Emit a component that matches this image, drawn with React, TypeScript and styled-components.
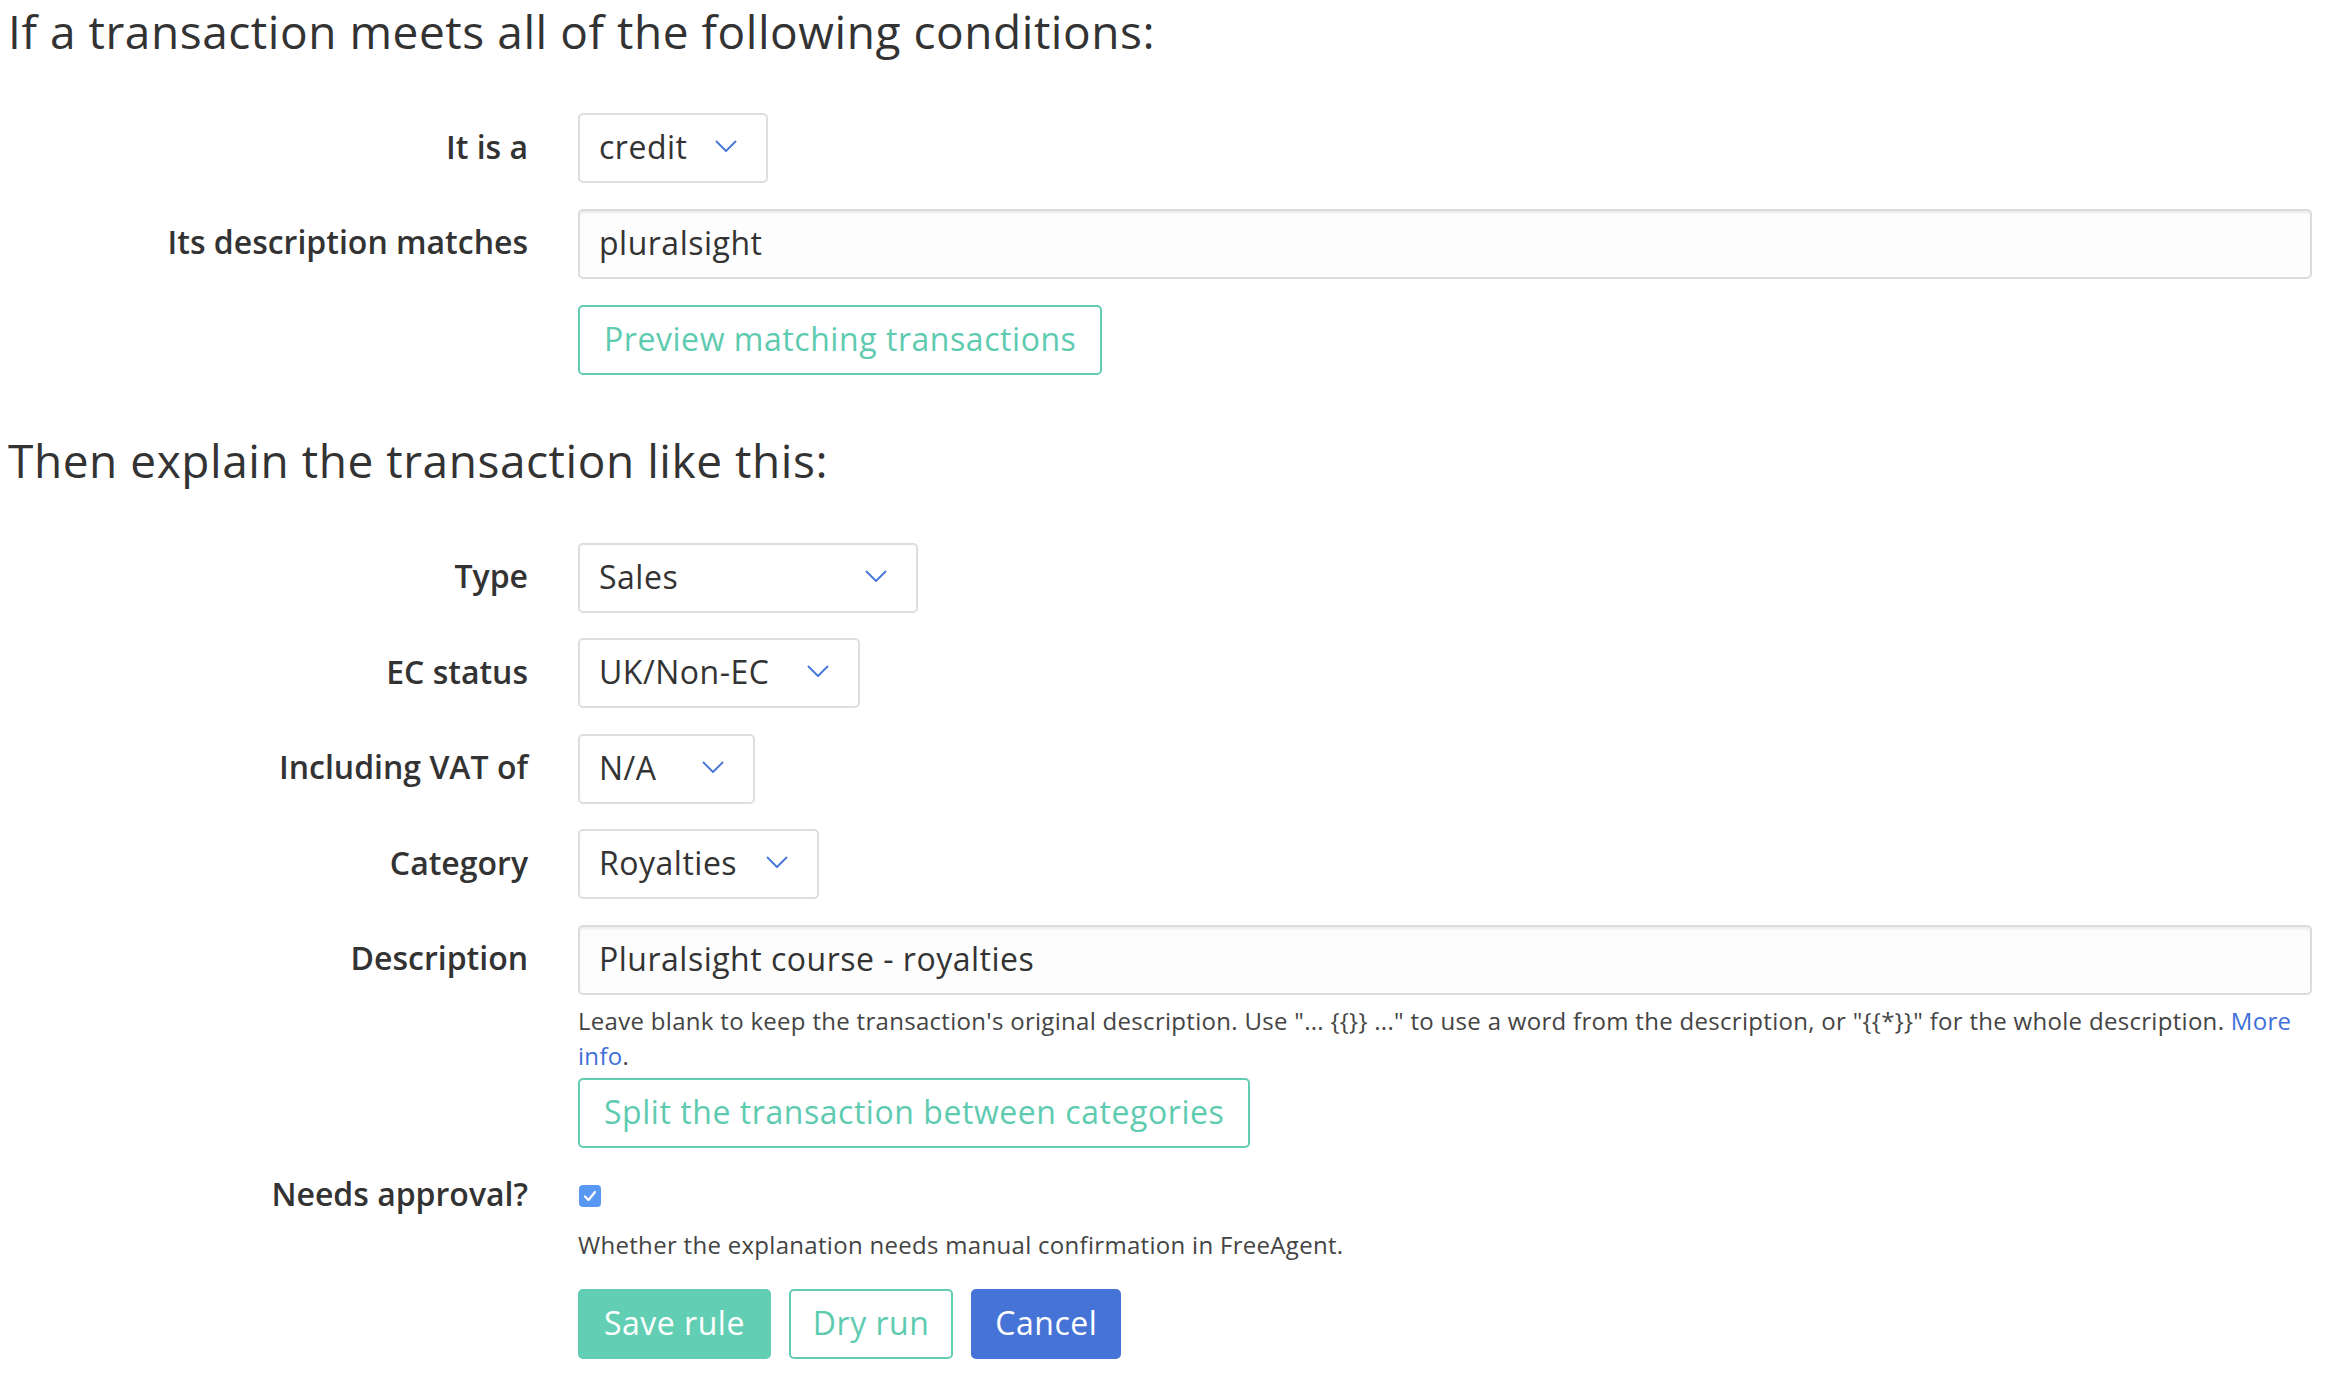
import React from "react";
import styled, { createGlobalStyle } from "styled-components";

const Global = createGlobalStyle`
  html, body { margin: 0; padding: 0; background: #ffffff; }
  body { font-family: "Open Sans", "Noto Sans", sans-serif; color: #333333; }
  * { box-sizing: border-box; }
`;

const Page = styled.div`
  padding: 3px 22px 0 8px;
`;

const Heading = styled.h2<{ $top: number; $bottom: number }>`
  margin: ${(p) => p.$top}px 0 ${(p) => p.$bottom}px 0;
  font-size: 46px;
  line-height: 56px;
  font-weight: 400;
  letter-spacing: 0.55px;
  color: #333333;
`;

const Row = styled.div<{ $mb?: number }>`
  display: grid;
  grid-template-columns: 520px 1fr;
  column-gap: 50px;
  margin-bottom: ${(p) => (p.$mb ?? 25.5)}px;
`;

const Label = styled.label<{ $h?: number }>`
  height: ${(p) => p.$h ?? 70}px;
  display: flex;
  align-items: center;
  justify-content: flex-end;
  padding-bottom: 4px;
  font-size: 32px;
  font-weight: 600;
  color: #333333;
  white-space: nowrap;
`;

const FieldCol = styled.div`
  display: flex;
  flex-direction: column;
  align-items: flex-start;
  min-width: 0;
`;

const SelectBox = styled.div<{ $w: number }>`
  width: ${(p) => p.$w}px;
  height: 70px;
  display: flex;
  align-items: center;
  justify-content: space-between;
  padding: 0 29px 3px 19px;
  border: 2px solid #dedede;
  border-radius: 5px;
  background: #fff;
  font-size: 32px;
  letter-spacing: 0.5px;
  color: #333333;
`;

const TextInput = styled.div`
  width: 100%;
  height: 70px;
  display: flex;
  align-items: center;
  padding: 0 19px 3px 19px;
  border: 2px solid #dcdcdc;
  border-radius: 5px;
  background: #fdfdfd;
  box-shadow: inset 0 3px 3px -1px rgba(0, 0, 0, 0.07);
  font-size: 32px;
  letter-spacing: 0.5px;
  color: #333333;
`;

const OutlineButton = styled.button<{ $mt?: number }>`
  margin-top: ${(p) => p.$mt ?? 0}px;
  height: 70px;
  padding: 0 24px 3px 24px;
  border: 2px solid #62cdb3;
  border-radius: 5px;
  background: #fff;
  color: #5ecbb0;
  font-family: inherit;
  font-size: 32px;
  letter-spacing: 0.55px;
  cursor: pointer;
`;

const Help = styled.p<{ $mt: number; $mb: number }>`
  margin: ${(p) => p.$mt}px 0 ${(p) => p.$mb}px 0;
  font-size: 24px;
  line-height: 35px;
  letter-spacing: 0.3px;
  color: #444444;
`;

const Link = styled.a`
  color: #3f6fd8;
  text-decoration: none;
`;

const CheckWrap = styled.div`
  height: 44px;
  display: flex;
  align-items: center;
`;

const CheckBox = styled.span`
  width: 22px;
  height: 22px;
  border-radius: 4px;
  background: #5898f2;
  display: flex;
  align-items: center;
  justify-content: center;
  margin-left: 1px;
`;

const Actions = styled.div`
  display: flex;
  gap: 18px;
`;

const ActionButton = styled.button<{ $kind: "save" | "dry" | "cancel" }>`
  height: 70px;
  padding: 0 ${(p) => (p.$kind === "save" ? 24 : 22)}px 3px;
  border-radius: 5px;
  font-family: inherit;
  font-size: 32px;
  letter-spacing: 0.5px;
  cursor: pointer;
  border: 2px solid
    ${(p) => (p.$kind === "cancel" ? "#4673d6" : "#62cdb3")};
  background: ${(p) =>
    p.$kind === "save" ? "#62cfb4" : p.$kind === "cancel" ? "#4673d6" : "#ffffff"};
  color: ${(p) => (p.$kind === "dry" ? "#5ecbb0" : "#ffffff")};
`;

const Chevron = () => (
  <svg width="22" height="13" viewBox="0 0 22 13" fill="none">
    <polyline points="1.5,1.5 11,11 20.5,1.5" stroke="#4a78d8" strokeWidth="1.9" strokeLinecap="round" strokeLinejoin="round" />
  </svg>
);

const Select = ({ value, w }: { value: string; w: number }) => (
  <SelectBox $w={w}>
    <span>{value}</span>
    <Chevron />
  </SelectBox>
);

const descriptionHelp =
  'Leave blank to keep the transaction\'s original description. Use "... {{}} ..." to use a word from the description, or "{{*}}" for the whole description. ';

export default function App() {
  return (
    <>
      <Global />
      <Page>
        <Heading $top={0} $bottom={54}>If a transaction meets all of the following conditions:</Heading>

        <Row>
          <Label>It is a</Label>
          <FieldCol>
            <Select value="credit" w={190} />
          </FieldCol>
        </Row>

        <Row $mb={0}>
          <Label>Its description matches</Label>
          <FieldCol>
            <TextInput>pluralsight</TextInput>
            <OutlineButton $mt={26}>Preview matching transactions</OutlineButton>
          </FieldCol>
        </Row>

        <Heading $top={57} $bottom={55}>Then explain the transaction like this:</Heading>

        <Row>
          <Label>Type</Label>
          <FieldCol>
            <Select value="Sales" w={340} />
          </FieldCol>
        </Row>
        <Row>
          <Label>EC status</Label>
          <FieldCol>
            <Select value="UK/Non-EC" w={282} />
          </FieldCol>
        </Row>
        <Row>
          <Label>Including VAT of</Label>
          <FieldCol>
            <Select value="N/A" w={177} />
          </FieldCol>
        </Row>
        <Row>
          <Label>Category</Label>
          <FieldCol>
            <Select value="Royalties" w={241} />
          </FieldCol>
        </Row>

        <Row $mb={26}>
          <Label>Description</Label>
          <FieldCol>
            <TextInput>Pluralsight course - royalties</TextInput>
            <Help $mt={8} $mb={5}>
              {descriptionHelp}
              <Link href="#">More</Link> <Link href="#">info</Link>.
            </Help>
            <OutlineButton>Split the transaction between categories</OutlineButton>
          </FieldCol>
        </Row>

        <Row $mb={0}>
          <Label $h={44}>Needs approval?</Label>
          <FieldCol>
            <CheckWrap>
              <CheckBox>
                <svg width="14" height="12" viewBox="0 0 14 12" fill="none">
                  <polyline points="2,6.5 5.5,10 12,2" stroke="#ffffff" strokeWidth="2.2" strokeLinecap="round" strokeLinejoin="round" />
                </svg>
              </CheckBox>
            </CheckWrap>
            <Help $mt={9} $mb={27}>Whether the explanation needs manual confirmation in FreeAgent.</Help>
            <Actions>
              <ActionButton $kind="save">Save rule</ActionButton>
              <ActionButton $kind="dry">Dry run</ActionButton>
              <ActionButton $kind="cancel">Cancel</ActionButton>
            </Actions>
          </FieldCol>
        </Row>
      </Page>
    </>
  );
}
